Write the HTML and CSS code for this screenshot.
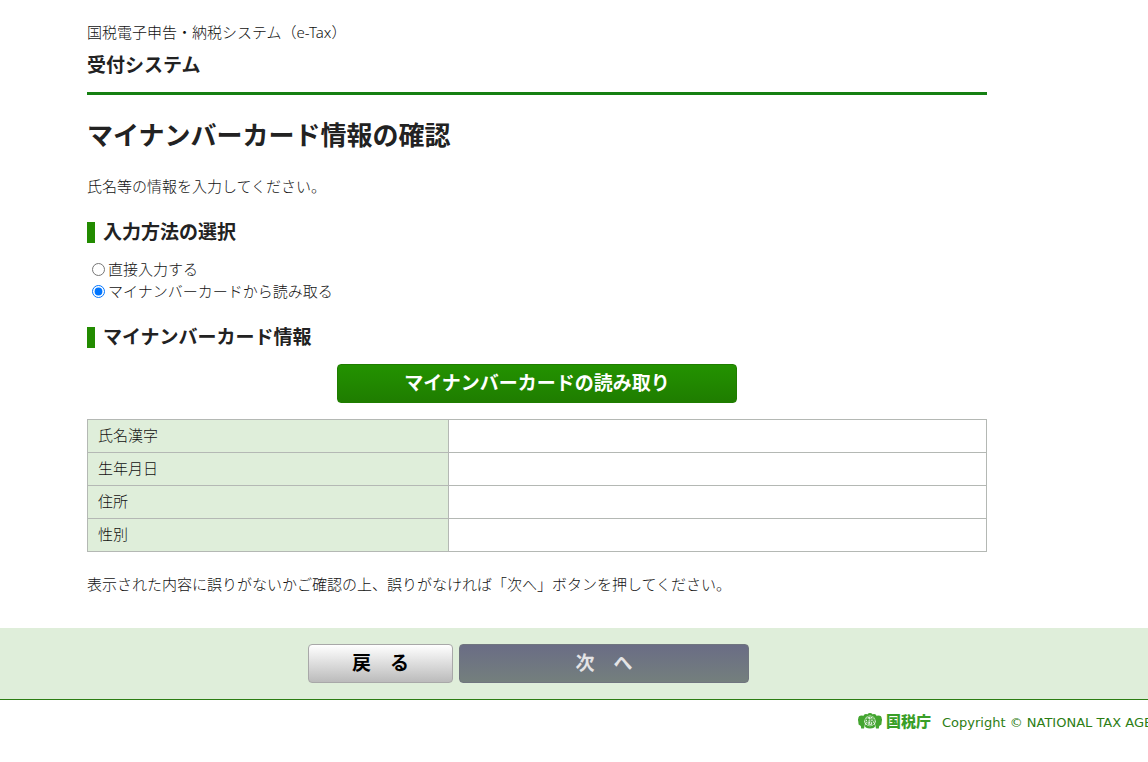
FILE: index.html
```html
<!DOCTYPE html>
<html lang="ja">
<head>
<meta charset="utf-8">
<meta name="viewport" content="width=device-width, initial-scale=1">
<title>マイナンバーカード情報の確認</title>
<link rel="stylesheet" href="styles.css">
</head>
<body>
<form class="page">
  <div class="container">
    <header class="site-header">
      <p class="site-name">国税電子申告・納税システム（e-Tax）</p>
      <p class="system-name">受付システム</p>
    </header>
    <main>
      <h1 class="page-title">マイナンバーカード情報の確認</h1>
      <p class="lead">氏名等の情報を入力してください。</p>
      <h2 class="section-title" id="method">入力方法の選択</h2>
      <div class="choices" role="radiogroup" aria-labelledby="method">
        <div class="choice"><input class="radio" type="radio" name="method" id="direct"><label for="direct">直接入力する</label></div>
        <div class="choice"><input class="radio" type="radio" name="method" id="card" checked><label for="card">マイナンバーカードから読み取る</label></div>
      </div>
      <h2 class="section-title">マイナンバーカード情報</h2>
      <button class="button button-read" type="button">マイナンバーカードの読み取り</button>
      <table class="info">
        <tr><th scope="row">氏名漢字</th><td></td></tr>
        <tr><th scope="row">生年月日</th><td></td></tr>
        <tr><th scope="row">住所</th><td></td></tr>
        <tr><th scope="row">性別</th><td></td></tr>
      </table>
      <p class="note">表示された内容に誤りがないかご確認の上、誤りがなければ「次へ」ボタンを押してください。</p>
    </main>
  </div>
  <div class="actions">
    <div class="actions-inner">
      <button class="button button-back" type="button">戻　る</button>
      <button class="button button-next" type="button" disabled>次　へ</button>
    </div>
  </div>
  <footer class="footer">
    <span class="agency">
      <svg class="emblem" viewBox="0 0 24 16" width="24" height="16" aria-hidden="true">
        <g fill="#43a52f">
          <circle cx="8" cy="3.5" r="2.6"/><circle cx="12" cy="2.8" r="2.8"/><circle cx="16" cy="3.5" r="2.6"/>
          <circle cx="3.6" cy="6" r="3.4"/><circle cx="20.4" cy="6" r="3.4"/>
          <path d="M0 6h5.5l1.5 5-1 4.5H3.2L2.8 13 .6 11.5zM24 6h-5.5L17 11l1 4.5h2.8l.4-2.5 2.2-1.5z"/>
          <ellipse cx="12" cy="13" rx="5" ry="2.4"/>
        </g>
        <circle cx="12" cy="7.8" r="5.4" fill="#fff"/>
        <circle cx="12" cy="7.8" r="4.6" fill="#e4f3e0" stroke="#43a52f" stroke-width=".8"/>
        <path d="M8.2 6.4h3.2M9.8 4.7v6.6M8.2 9.2l1.6-2 1.3 1.5M12.4 4.4l.8 1.2M15.2 4.4l-.8 1.2M12.2 6.2h3.2v2h-3.2zM13.2 8.4l-1.2 2.8M14.6 8.4v2.4h1.4" fill="none" stroke="#379625" stroke-width=".9"/>
      </svg>
      <span class="agency-name">国税庁</span>
    </span>
    <small class="copyright">Copyright © NATIONAL TAX AGENCY</small>
  </footer>
</form>
</body>
</html>
```
FILE: styles.css
```css
* { box-sizing: border-box; }

body {
  margin: 0;
  background: #fff;
  color: #222;
  font-family: "Noto Sans", "Noto Sans CJK JP", sans-serif;
  font-size: 15px;
  line-height: 22px;
}

p, h1, h2 { margin: 0; }

.container {
  max-width: 987px;
  padding: 21px 0 0 87px;
}

.site-header {
  padding-bottom: 13px;
  border-bottom: 3px solid #158012;
}

.site-name, .lead, .note, .choice, .info th {
  color: #111;
  font-weight: 300;
}

.system-name {
  margin-top: 8px;
  font-size: 19px;
  line-height: 28px;
  font-weight: 700;
}

.page-title {
  margin-top: 21px;
  font-size: 26px;
  line-height: 38px;
}

.lead { margin-top: 21px; }

.section-title {
  margin-top: 25px;
  padding-left: 8px;
  border-left: 8px solid #228b00;
  font-size: 19px;
  line-height: 21px;
}

.choices { margin-top: 15px; }

.choice {
  display: flex;
  align-items: center;
}

.radio {
  width: 13px;
  height: 13px;
  margin: 0 3px 0 5px;
}

.button {
  height: 39px;
  padding: 0 8px 2px;
  border: 1px solid transparent;
  border-radius: 4px;
  font-family: inherit;
  font-size: 19px;
  font-weight: 700;
  line-height: 28px;
}

.button-read {
  display: block;
  width: 400px;
  max-width: 100%;
  margin: 16px auto;
  border-color: #1f7d00;
  background: linear-gradient(#239200, #1f7d00);
  color: #fff;
}

.info {
  width: 100%;
  border-collapse: collapse;
}

.info th, .info td {
  height: 33px;
  padding: 0 10px 2px;
  border: 1px solid #b4b8b4;
}

.info th {
  width: 361px;
  background: #dfeeda;
  text-align: left;
}

.note { margin-top: 21px; }

.actions {
  margin-top: 33px;
  padding: 16px 0;
  border-bottom: 1px solid #2c7d14;
  background: #dfeeda;
}

.actions-inner {
  display: flex;
  justify-content: center;
  gap: 6px;
  max-width: 1057px;
}

.button-back {
  width: 145px;
  border-color: #a8a8a8;
  background: linear-gradient(#fff, #bbb);
  color: #000;
}

.button-next {
  width: 290px;
  border-color: #70757f;
  background: linear-gradient(#6a6d85, #747f7d);
  color: #e4e4e6;
}

.footer {
  display: flex;
  align-items: flex-end;
  gap: 11px;
  padding: 10px 0 0 858px;
  overflow: hidden;
  white-space: nowrap;
}

.agency {
  display: flex;
  align-items: center;
  gap: 4px;
  padding-bottom: 2px;
  color: #3a9f28;
}

.emblem { flex: none; }

.agency-name {
  font-family: "Noto Sans CJK JP", sans-serif;
  font-weight: 900;
}

.copyright {
  color: #2c7d14;
  font-family: "DejaVu Sans", sans-serif;
  font-size: 13px;
}
```
